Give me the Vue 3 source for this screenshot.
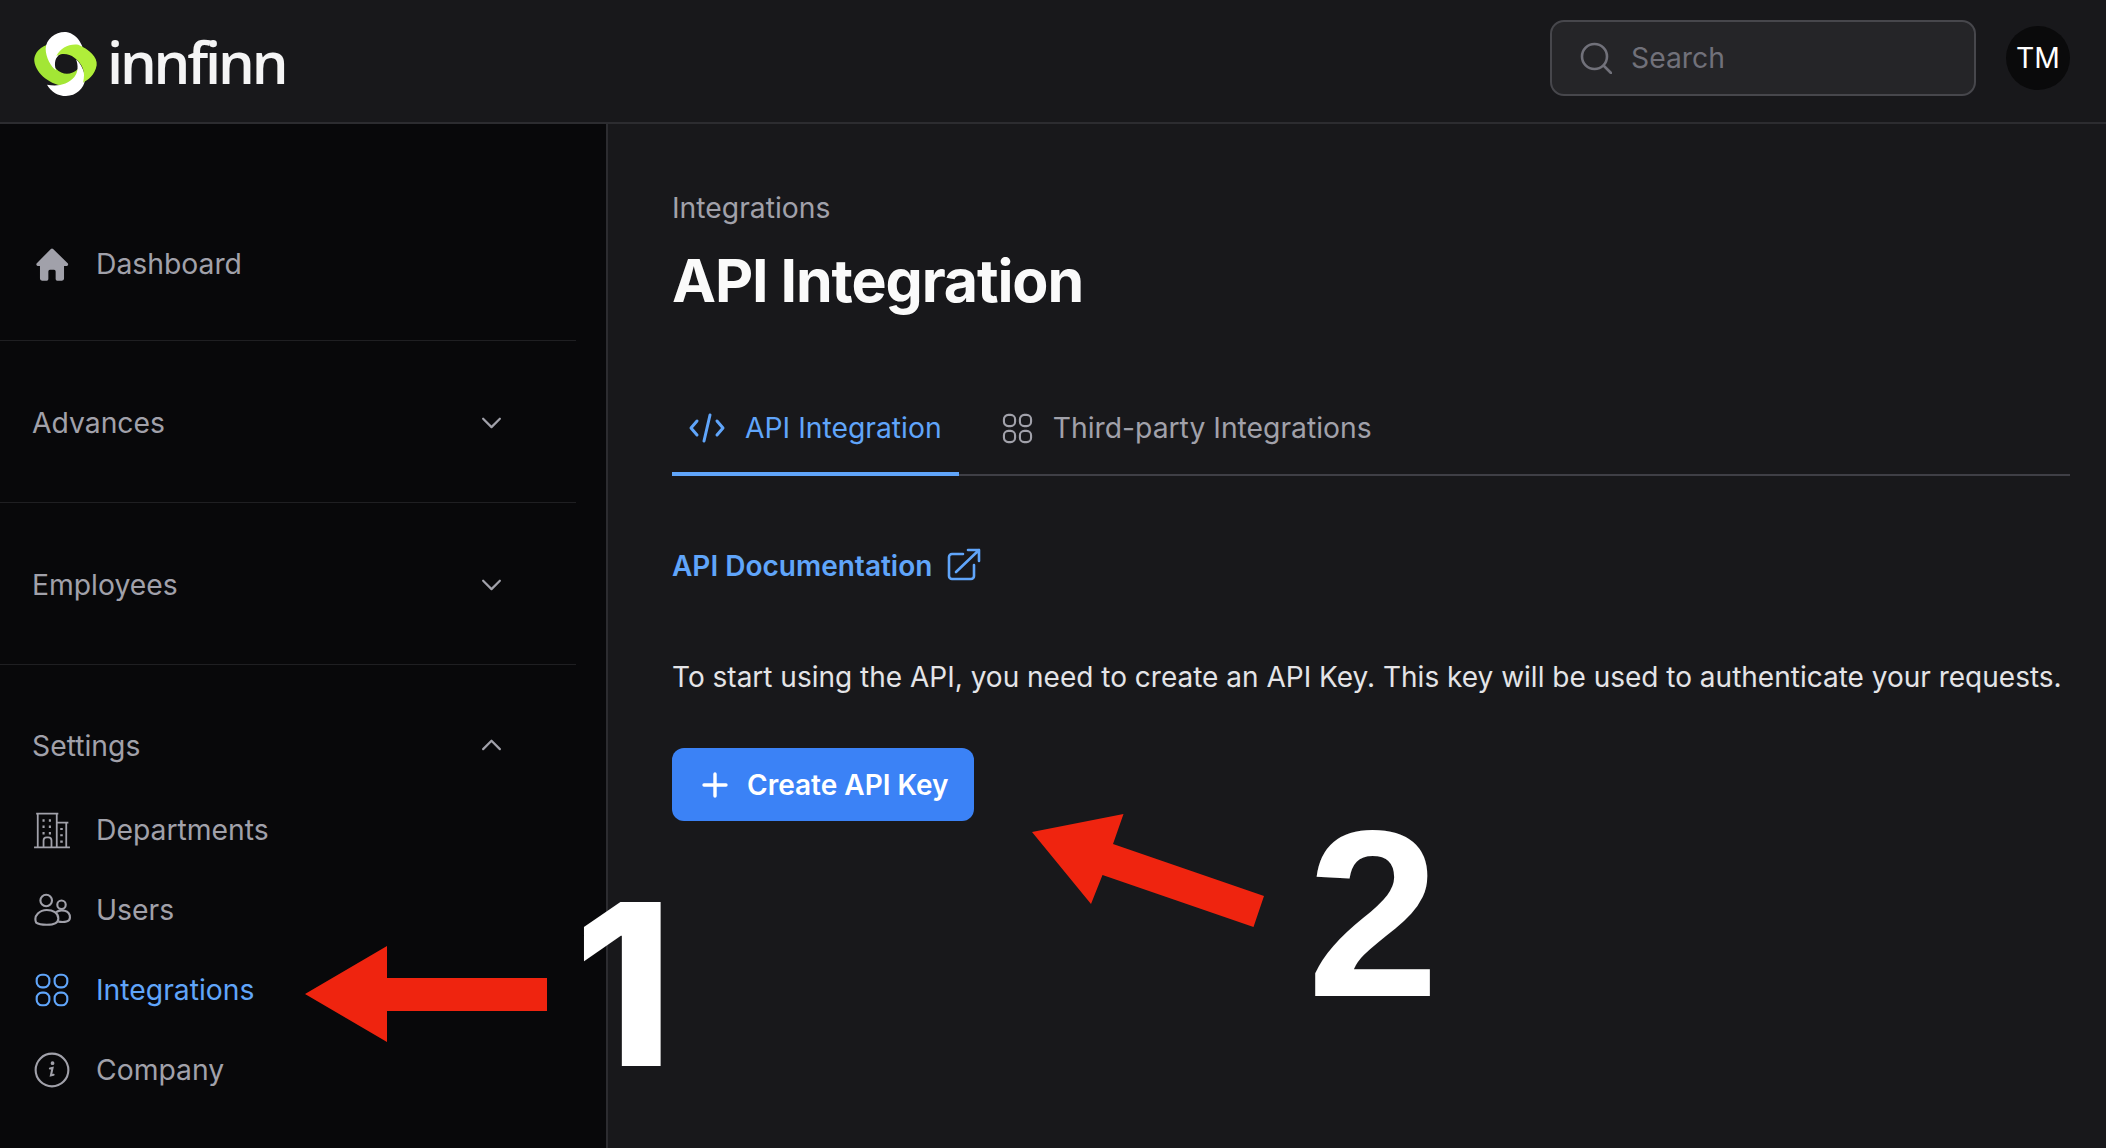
<script setup>
const groups = [
  { label: 'Advances', open: false },
  { label: 'Employees', open: false },
]

const settings = [
  { label: 'Departments', icon: 'building' },
  { label: 'Users', icon: 'users' },
  { label: 'Integrations', icon: 'grid', active: true },
  { label: 'Company', icon: 'info' },
]
</script>

<template>
  <div class="page">
    <header class="topbar">
      <div class="brand">
        <svg class="logo" viewBox="0 0 270 252">
          <path fill="#a3e635" d="M78 68C50 78 38 100 40 118C44 155 90 192 135 192C155 184 172 165 172 140C150 160 125 160 105 140C90 125 75 95 78 68Z" />
          <path fill="#fff" d="M135 30C105 28 75 50 74 80C74 105 90 135 105 145C98 122 103 106 118 96C145 85 165 95 190 118C195 85 175 35 135 30Z" />
          <path fill="#fff" d="M165 112C172 130 172 150 160 165C140 188 110 194 78 188C90 210 112 222 135 222C165 222 190 200 192 172C192 150 180 125 165 112Z" />
          <path fill="#b0ee3a" d="M106 102C118 78 145 64 172 68C205 82 230 105 227 130C222 160 200 175 186 182C195 150 185 125 160 107C145 96 125 92 106 102Z" />
        </svg>
        <span class="brand-name">innfinn</span>
      </div>
      <div class="top-right">
        <div class="search">
          <svg class="search-icon" viewBox="0 0 32 32" fill="none" stroke="currentColor" stroke-width="2.6" stroke-linecap="round">
            <circle cx="14.5" cy="14.5" r="12.5" />
            <path d="M24 24l7 7" />
          </svg>
          <span>Search</span>
        </div>
        <div class="avatar">TM</div>
      </div>
    </header>

    <div class="body">
      <aside class="sidebar">
        <section class="side-section side-first">
          <a class="side-item">
            <svg class="side-icon" viewBox="0 0 24 24" fill="currentColor">
              <path d="M11.3 2.5a1 1 0 0 1 1.4 0l9.2 9a1 1 0 0 1-.7 1.7H19.6v8a1.3 1.3 0 0 1-1.3 1.3h-3a1 1 0 0 1-1-1v-4.8a1 1 0 0 0-1-1h-2.6a1 1 0 0 0-1 1v4.8a1 1 0 0 1-1 1h-3a1.3 1.3 0 0 1-1.3-1.3v-8H3.1a1 1 0 0 1-.7-1.7z" />
            </svg>
            <span>Dashboard</span>
          </a>
        </section>

        <section v-for="g in groups" :key="g.label" class="side-section">
          <div class="group-head">
            <span>{{ g.label }}</span>
            <svg class="chevron" viewBox="0 0 24 14" fill="none" stroke="currentColor" stroke-width="2.4" stroke-linecap="round" stroke-linejoin="round">
              <path d="M3 3l9 9 9-9" />
            </svg>
          </div>
        </section>

        <section class="side-section side-last">
          <div class="group-head">
            <span>Settings</span>
            <svg class="chevron chevron-up" viewBox="0 0 24 14" fill="none" stroke="currentColor" stroke-width="2.4" stroke-linecap="round" stroke-linejoin="round">
              <path d="M3 12l9-9 9 9" />
            </svg>
          </div>
          <div class="side-list">
            <a v-for="item in settings" :key="item.label" class="side-item" :class="{ active: item.active }">
              <svg v-if="item.icon === 'building'" class="side-icon" viewBox="0 0 36 36" fill="none" stroke="currentColor" stroke-width="1.7">
                <path d="M1 34.5h34M4.5 34.5V2.5M3 2.5h21M22.5 2.5v32M22.5 11h11M31.5 11v23.500" />
                <path d="M10 34.500v-6.500a3 3 0 0 1 3-3h1.500a3 3 0 0 1 3 3v6.500" />
                <path stroke-width="2.400" stroke-dasharray="2 4" d="M9 9h11M9 15h11M9 21h11M27 16v14" />
              </svg>
              <svg v-else-if="item.icon === 'users'" class="side-icon" viewBox="0 0 36 36" fill="none" stroke="currentColor" stroke-width="2">
                <circle cx="12.500" cy="9" r="5.500" />
                <circle cx="27" cy="13" r="4" />
                <path d="M3 30c-3-7 4-12 10-12s11 3 11 8c0 5-5 6-11 6-5 0-8-.500-10-2z" />
                <path d="M22 20c4-3 13-2 13 5 0 4-5 5-11 4" />
              </svg>
              <svg v-else-if="item.icon === 'grid'" class="side-icon" viewBox="0 0 36 36" fill="none" stroke="currentColor" stroke-width="2">
                <rect x="3.500" y="3.500" width="12" height="12" rx="5" />
                <rect x="20.500" y="3.500" width="12" height="12" rx="5" />
                <rect x="3.500" y="20.500" width="12" height="12" rx="5" />
                <rect x="20.500" y="20.500" width="12" height="12" rx="5" />
              </svg>
              <svg v-else class="side-icon" viewBox="0 0 36 36" fill="none" stroke="currentColor" stroke-width="2" stroke-linecap="round">
                <circle cx="18" cy="18" r="15.500" />
                <path d="M16 16.500l2.500-.500-1.500 7 2.500-.500" />
                <circle cx="18.500" cy="11.500" r=".8" fill="currentColor" />
              </svg>
              <span>{{ item.label }}</span>
            </a>
          </div>
        </section>
      </aside>

      <main class="content">
        <div class="crumb">Integrations</div>
        <h1 class="title">API Integration</h1>

        <nav class="tabs">
          <a class="tab active">
            <svg class="tab-icon code" viewBox="0 0 36 30" fill="none" stroke="currentColor" stroke-width="3" stroke-linecap="round" stroke-linejoin="round">
              <path d="M8 8l-6 7 6 7M28 8l6 7-6 7M21 2l-6 26" />
            </svg>
            <span>API Integration</span>
          </a>
          <a class="tab">
            <svg class="tab-icon" viewBox="0 0 32 32" fill="none" stroke="currentColor" stroke-width="2.200">
              <rect x="2" y="2" width="11.500" height="11.500" rx="4.500" />
              <rect x="18.500" y="2" width="11.500" height="11.500" rx="4.500" />
              <rect x="2" y="18.500" width="11.500" height="11.500" rx="4.500" />
              <rect x="18.500" y="18.500" width="11.500" height="11.500" rx="4.500" />
            </svg>
            <span>Third-party Integrations</span>
          </a>
        </nav>

        <a class="doc-link">
          <span>API Documentation</span>
          <svg class="doc-icon" viewBox="0 0 34 34" fill="none" stroke="currentColor" stroke-width="2.600" stroke-linecap="round" stroke-linejoin="round">
            <path d="M16 6H5a3 3 0 0 0-3 3v19a3 3 0 0 0 3 3h19a3 3 0 0 0 3-3V17" />
            <path d="M9 24L32 2M21 2h11v11" />
          </svg>
        </a>

        <p class="intro">To start using the API, you need to create an API Key. This key will be used to authenticate your requests.</p>

        <button class="create-btn" type="button">
          <svg class="plus" viewBox="0 0 26 26" fill="none" stroke="currentColor" stroke-width="3.400" stroke-linecap="round">
            <path d="M13 2v22M2 13h22" />
          </svg>
          <span>Create API Key</span>
        </button>
      </main>
    </div>

    <!-- red markers pasted over the screenshot -->
    <svg class="markers" viewBox="0 0 2106 1148">
      <path fill="#ef240f" d="M305 994L387 946V978H547V1011H387V1042Z" />
      <path fill="#ef240f" d="M1032 832L1123.500 814L1113 844L1264 896L1253.500 927L1102.500 875L1091 904Z" />
    </svg>
    <span class="step step-one">1</span>
    <span class="step step-two">2</span>
  </div>
</template>

<style>
html, body {
  margin: 0;
  background: #18181b;
}
</style>

<style scoped>
.page {
  position: relative;
  width: 2106px;
  height: 1148px;
  overflow: hidden;
  display: flex;
  flex-direction: column;
  background: #18181b;
  color: #a1a1aa;
  font-family: Inter, "Liberation Sans", sans-serif;
  font-size: 28.3px;
}

.topbar {
  height: 122px;
  flex-shrink: 0;
  display: flex;
  align-items: center;
  justify-content: space-between;
  padding: 0 36px 0 32px;
  border-bottom: 2px solid #2c2c30;
}

.brand {
  display: flex;
  align-items: center;
  gap: 4px;
}

.logo {
  width: 90px;
  height: 84px;
  margin: 6px -8px 0 -11px;
}

.brand-name {
  font-family: "Open Sans", sans-serif;
  font-size: 58px;
  font-weight: 600;
  letter-spacing: -3.2px;
  color: #f4f4f5;
  line-height: 1;
  margin-top: 2px;
}

.top-right {
  display: flex;
  align-items: center;
  gap: 30px;
}

.search {
  box-sizing: border-box;
  width: 426px;
  height: 76px;
  margin-top: -6px;
  display: flex;
  align-items: center;
  gap: 19px;
  padding-left: 28px;
  background: #252528;
  border: 2px solid #47474c;
  border-radius: 14px;
  color: #71717a;
}

.search-icon {
  width: 32px;
  height: 32px;
}

.avatar {
  width: 64px;
  height: 64px;
  margin-top: -6px;
  border-radius: 50%;
  background: #0a0a0b;
  color: #fff;
  display: flex;
  align-items: center;
  justify-content: center;
}

.body {
  flex: 1;
  display: flex;
  min-height: 0;
}

.sidebar {
  width: 608px;
  flex-shrink: 0;
  box-sizing: border-box;
  background: #08080a;
  border-right: 2px solid #2c2c30;
  padding-right: 30px;
}

.side-section {
  height: 162px;
  box-sizing: border-box;
  padding-top: 2px;
  border-bottom: 1px solid #1f1f22;
  display: flex;
  flex-direction: column;
  justify-content: center;
}

.side-first {
  height: 217px;
  padding-top: 63px;
}

.side-last {
  height: auto;
  border-bottom: 0;
  padding-top: 61px;
  justify-content: flex-start;
}

.group-head {
  display: flex;
  align-items: center;
  justify-content: space-between;
  padding: 0 73px 0 32px;
  line-height: 40px;
}

.chevron {
  width: 23px;
  height: 13px;
}

.chevron-up {
  margin-top: -3px;
}

.side-list {
  display: flex;
  flex-direction: column;
  gap: 40px;
  margin-top: 44px;
}

.side-item {
  display: flex;
  align-items: center;
  gap: 25px;
  padding-left: 33px;
  line-height: 40px;
}

.side-item.active {
  color: #60a5fa;
}

.side-icon {
  width: 38px;
  height: 38px;
  flex-shrink: 0;
}

.content {
  flex: 1;
  min-width: 0;
  padding: 64px 36px 0 64px;
}

.crumb {
  line-height: 40px;
}

.title {
  margin: 17px 0 0;
  font-size: 59px;
  font-weight: 700;
  line-height: 72px;
  letter-spacing: -1.1px;
  color: #fafafa;
}

.tabs {
  display: flex;
  gap: 26px;
  margin-top: 65px;
  border-bottom: 2px solid #3f3f46;
}

.tab {
  display: flex;
  align-items: center;
  gap: 20px;
  height: 94px;
  margin-bottom: -2px;
  padding: 2px 17px 0;
  box-sizing: border-box;
  border-bottom: 4px solid transparent;
}

.tab.active {
  color: #60a5fa;
  border-bottom-color: #60a5fa;
}

.tab-icon {
  width: 31px;
  height: 31px;
}

.code {
  width: 36px;
  height: 30px;
}

.doc-link {
  display: inline-flex;
  align-items: center;
  gap: 15px;
  margin-top: 70px;
  color: #60a5fa;
  font-weight: 600;
  font-size: 28px;
  line-height: 40px;
}

.doc-icon {
  width: 34px;
  height: 34px;
  margin-top: -3px;
}

.intro {
  margin: 71px 0 0;
  color: #e4e4e7;
  font-size: 28px;
  line-height: 40px;
  white-space: nowrap;
}

.create-btn {
  display: flex;
  align-items: center;
  gap: 19px;
  width: 302px;
  height: 73px;
  margin-top: 51px;
  padding: 0 0 0 30px;
  border: 0;
  border-radius: 12px;
  background: #3b82f6;
  color: #fff;
  font: inherit;
  font-size: 28px;
  font-weight: 600;
}

.plus {
  width: 26px;
  height: 26px;
}

.markers {
  position: absolute;
  inset: 0;
  width: 2106px;
  height: 1148px;
  pointer-events: none;
}

.step {
  position: absolute;
  font-family: Inter, sans-serif;
  font-size: 225px;
  font-weight: 800;
  line-height: 1;
  color: #fff;
}

.step-one {
  left: 574px;
  top: 872px;
}

.step-two {
  left: 1307px;
  top: 795px;
  font-family: "Liberation Sans", sans-serif;
  font-size: 238px;
  font-weight: 700;
}
</style>
